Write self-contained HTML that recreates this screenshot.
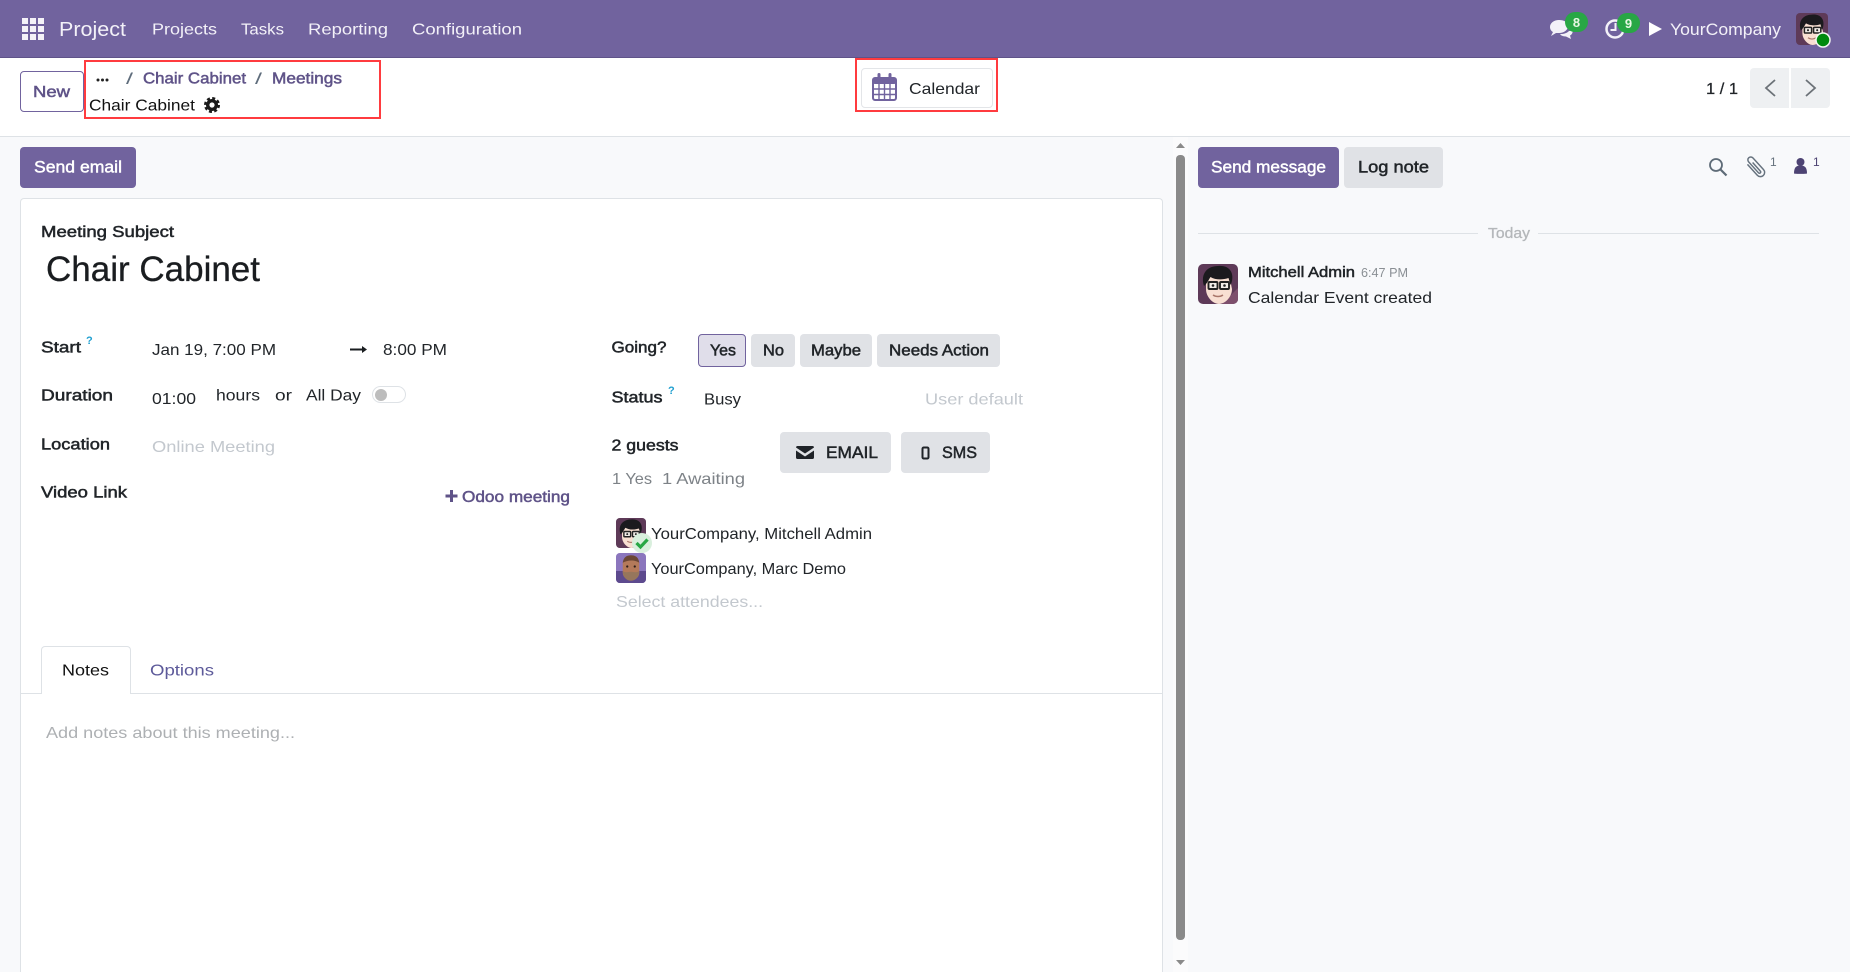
<!DOCTYPE html>
<html lang="en">
<head>
<meta charset="utf-8">
<title>Chair Cabinet</title>
<style>
html,body{margin:0;padding:0;width:1850px;height:972px;overflow:hidden;background:#f8f9fb;font-family:"Liberation Sans",sans-serif}
body{position:relative}
.b{position:absolute;box-sizing:border-box}
svg.layer{position:absolute;left:0;top:0;width:1850px;height:972px;display:block}
text{font-family:"Liberation Sans",sans-serif;font-size:16px;fill:#212529}
.m{stroke:#212529;stroke-width:.5px}
.w{fill:#f3f1f8}
.lm{fill:#5f5388;stroke:#5f5388;stroke-width:.5px}
.g{fill:#c3c8ce}
.gr{fill:#7d8287}
.wm{fill:#fff;stroke:#fff;stroke-width:.45px}
</style>
</head>
<body>
<!-- navbar -->
<div class="b" style="left:0;top:0;width:1850px;height:58px;background:#71639e;border-bottom:1px solid #5f5389"></div>
<!-- control panel -->
<div class="b" style="left:0;top:58px;width:1850px;height:79px;background:#fff;border-bottom:1px solid #dee2e6"></div>
<div class="b" style="left:20px;top:71px;width:64px;height:41px;background:#fff;border:1px solid #71639e;border-radius:4px"></div>
<div class="b" style="left:84px;top:60px;width:297px;height:59px;border:2px solid #ff3b3f"></div>
<div class="b" style="left:855px;top:58px;width:143px;height:54px;border:2px solid #ff3b3f"></div>
<div class="b" style="left:861px;top:68px;width:132px;height:40px;background:#fff;border:1px solid #e3e5e8;border-radius:4px"></div>
<div class="b" style="left:1750px;top:68px;width:39px;height:40px;background:#eef0f2;border-radius:4px 0 0 4px"></div>
<div class="b" style="left:1791px;top:68px;width:39px;height:40px;background:#eef0f2;border-radius:0 4px 4px 0"></div>
<!-- form -->
<div class="b" style="left:20px;top:147px;width:116px;height:41px;background:#71639e;border-radius:4px"></div>
<div class="b" style="left:20px;top:198px;width:1143px;height:774px;background:#fff;border:1px solid #dee2e6;border-bottom:0;border-radius:4px 4px 0 0"></div>
<div class="b" style="left:21px;top:693px;width:1141px;height:1px;background:#dee2e6"></div>
<div class="b" style="left:41px;top:646px;width:90px;height:48px;background:#fff;border:1px solid #dee2e6;border-bottom:0;border-radius:4px 4px 0 0"></div>
<!-- going buttons -->
<div class="b" style="left:698px;top:334px;width:48px;height:33px;background:#e0deea;border:1px solid #71639e;border-radius:4px"></div>
<div class="b" style="left:751px;top:334px;width:44px;height:33px;background:#e0e2e6;border-radius:4px"></div>
<div class="b" style="left:800px;top:334px;width:72px;height:33px;background:#e0e2e6;border-radius:4px"></div>
<div class="b" style="left:877px;top:334px;width:123px;height:33px;background:#e0e2e6;border-radius:4px"></div>
<div class="b" style="left:780px;top:432px;width:111px;height:41px;background:#e0e2e6;border-radius:4px"></div>
<div class="b" style="left:901px;top:432px;width:89px;height:41px;background:#e0e2e6;border-radius:4px"></div>
<!-- toggle -->
<div class="b" style="left:372px;top:386px;width:34px;height:17px;background:#fff;border:1px solid #dee2e6;border-radius:9px"></div>
<div class="b" style="left:375px;top:389px;width:12px;height:12px;background:#bdbdbd;border-radius:50%"></div>
<!-- scrollbar -->
<div class="b" style="left:1173px;top:137px;width:15px;height:835px;background:#fbfbfc"></div>
<div class="b" style="left:1176px;top:155px;width:9px;height:785px;background:#8a8a8a;border-radius:4px"></div>
<!-- chatter -->
<div class="b" style="left:1198px;top:147px;width:141px;height:41px;background:#71639e;border-radius:4px"></div>
<div class="b" style="left:1344px;top:147px;width:99px;height:41px;background:#e0e2e6;border-radius:4px"></div>
<div class="b" style="left:1198px;top:233px;width:280px;height:1px;background:#dee2e6"></div>
<div class="b" style="left:1538px;top:233px;width:281px;height:1px;background:#dee2e6"></div>

<svg class="layer" viewBox="0 0 1850 972" xmlns="http://www.w3.org/2000/svg">
<defs>
<clipPath id="rr"><rect x="0" y="0" width="40" height="40" rx="5"/></clipPath>
<g id="mitchell">
 <g clip-path="url(#rr)">
 <rect width="40" height="40" fill="#5e3a58"/>
 <path d="M24 40h16V24z" fill="#7d4f6c"/>
 <path d="M8 20c0-9 6-12 13-12s12 4 12 12l1 5c0 8-7 15-13 15S8 33 8 25z" fill="#f8dfd2"/>
 <path d="M6 22C2 9 10 2 20 2c10-1 16 5 14 15-.5 2-1 3-1.500 4l-2-7c-6 2-13 2-18-1-2 3-3 6-6.500 9z" fill="#1b1a1e"/>
 <rect x="10.500" y="18" width="9" height="7" rx="1" fill="#f2ede8" stroke="#222" stroke-width="1.900"/>
 <rect x="22" y="18" width="9" height="7" rx="1" fill="#f2ede8" stroke="#222" stroke-width="1.900"/>
 <circle cx="15" cy="21.500" r="1.300" fill="#222"/><circle cx="26.500" cy="21.500" r="1.300" fill="#222"/>
 <path d="M15 31c3 2 7 2 10 0" fill="none" stroke="#a9766a" stroke-width="1.500"/>
 </g>
</g>
<g id="marc">
 <g clip-path="url(#rr)">
 <rect width="40" height="40" fill="#8b76bd"/>
 <rect y="24" width="40" height="16" fill="#5d4a8e"/>
 <path d="M9 14c0-7 5-10 11-10s11 3 11 10v12c0 7-6 10-11 10S9 33 9 26z" fill="#b47a5a"/>
 <path d="M9 13C10 5 15 3 20 3s10 2 11 10c-6-4-15-4-22 0z" fill="#6b4735"/>
 <path d="M9 24c4 3 7 1 11 1s7 2 11-1c0 8-5 13-11 13S9 32 9 24z" fill="#96765c"/>
 <circle cx="15" cy="18" r="1.500" fill="#2a1c17"/><circle cx="25" cy="18" r="1.500" fill="#2a1c17"/>
 </g>
</g>
</defs>

<!-- navbar -->
<g fill="#f4f2f8">
<rect x="22" y="18" width="6" height="6"/><rect x="30" y="18" width="6" height="6"/><rect x="38" y="18" width="6" height="6"/>
<rect x="22" y="26" width="6" height="6"/><rect x="30" y="26" width="6" height="6"/><rect x="38" y="26" width="6" height="6"/>
<rect x="22" y="34" width="6" height="6"/><rect x="30" y="34" width="6" height="6"/><rect x="38" y="34" width="6" height="6"/>
</g>
<text x="59" y="36" style="font-size:20px" class="w" textLength="67" lengthAdjust="spacingAndGlyphs">Project</text>
<text x="152" y="34.500" class="w" textLength="65" lengthAdjust="spacingAndGlyphs">Projects</text>
<text x="241" y="34.500" class="w" textLength="43" lengthAdjust="spacingAndGlyphs">Tasks</text>
<text x="308" y="34.500" class="w" textLength="80" lengthAdjust="spacingAndGlyphs">Reporting</text>
<text x="412" y="34.500" class="w" textLength="110" lengthAdjust="spacingAndGlyphs">Configuration</text>

<path d="M1559 20c-5 0-9 3-9 7 0 2 1 4 3 5l-2 4 5-3h3c5 0 9-3 9-7s-4-6-9-6z" fill="#f3f1f8"/>
<path d="M1569 31c-2 2-5 3-8 3l-1 .5c2 1.500 4 2 6 2l5 2.500-1-3.500c2-1 3-3 2.500-5z" fill="#f3f1f8"/>
<rect x="1565" y="12" width="23" height="20" rx="10" fill="#28a745"/>
<text x="1576.500" y="27" text-anchor="middle" style="font-size:13px;fill:#e8f7e4;font-weight:bold">8</text>

<circle cx="1615" cy="29" r="8.500" fill="none" stroke="#f3f1f8" stroke-width="2.500"/>
<path d="M1615.500 23v7h-5" fill="none" stroke="#f3f1f8" stroke-width="2"/>
<rect x="1617" y="13" width="23" height="20" rx="10" fill="#28a745"/>
<text x="1628.500" y="28" text-anchor="middle" style="font-size:13px;fill:#e8f7e4;font-weight:bold">9</text>

<path d="M1649 22l13 7-13 7z" fill="#fff"/>
<text x="1670" y="35" class="w" style="font-size:17px" textLength="111" lengthAdjust="spacingAndGlyphs">YourCompany</text>
<use href="#mitchell" transform="translate(1796 13) scale(.8)"/>
<circle cx="1823" cy="40" r="7" fill="#008a0e" stroke="#f3f6f3" stroke-width="1.500"/>

<!-- control panel -->
<text x="33" y="97" class="lm" textLength="37" lengthAdjust="spacingAndGlyphs">New</text>
<g fill="#222"><circle cx="98" cy="80" r="1.500"/><circle cx="102.500" cy="80" r="1.500"/><circle cx="107" cy="80" r="1.500"/></g>
<text x="126" y="84" style="fill:#5f6d7c" textLength="7" lengthAdjust="spacingAndGlyphs">/</text>
<text x="143" y="83.500" class="lm" textLength="103" lengthAdjust="spacingAndGlyphs">Chair Cabinet</text>
<text x="255" y="84" style="fill:#5f6d7c" textLength="7" lengthAdjust="spacingAndGlyphs">/</text>
<text x="272" y="83.500" class="lm" textLength="70" lengthAdjust="spacingAndGlyphs">Meetings</text>
<text x="89" y="110.500" style="fill:#111" textLength="106" lengthAdjust="spacingAndGlyphs">Chair Cabinet</text>
<circle cx="212" cy="105" r="4.300" fill="none" stroke="#1b1b1b" stroke-width="3.400"/>
<circle cx="212" cy="105" r="6.800" fill="none" stroke="#1b1b1b" stroke-width="2.400" stroke-dasharray="3 2.340"/>

<g fill="none" stroke="#71639e">
<rect x="873" y="78" width="23" height="22" rx="2" stroke-width="2"/>
<rect x="873" y="78" width="23" height="6" rx="2" fill="#71639e" stroke="none"/>
<path d="M879 74.500v6M890 74.500v6" stroke-width="3" stroke-linecap="round"/>
<path d="M873 89h23M873 94.500h23M879 84v16M884.500 84v16M890 84v16" stroke-width="1.400"/>
</g>
<text x="909" y="94" textLength="71" lengthAdjust="spacingAndGlyphs">Calendar</text>

<text x="1706" y="94" style="font-size:16px;stroke:#212529;stroke-width:.25px" textLength="32" lengthAdjust="spacingAndGlyphs">1 / 1</text>
<path d="M1775 80l-9 8 9 8" fill="none" stroke="#6c7278" stroke-width="1.800"/>
<path d="M1806 80l9 8-9 8" fill="none" stroke="#6c7278" stroke-width="1.800"/>

<!-- form -->
<text x="34" y="172.500" class="wm" textLength="88" lengthAdjust="spacingAndGlyphs" style="font-size:17px">Send email</text>
<text x="41" y="237" class="m" textLength="133" lengthAdjust="spacingAndGlyphs">Meeting Subject</text>
<text x="46" y="281" style="font-size:35px;fill:#1a1d20;stroke:#1a1d20;stroke-width:.3px" textLength="214" lengthAdjust="spacingAndGlyphs">Chair Cabinet</text>

<text x="41" y="352.500" class="m" textLength="40" lengthAdjust="spacingAndGlyphs">Start</text>
<text x="86" y="344" style="font-size:11px;fill:#1f9fd0;font-weight:bold">?</text>
<text x="152" y="355" textLength="124" lengthAdjust="spacingAndGlyphs">Jan 19, 7:00 PM</text>
<path d="M350 349.500h14" stroke="#1a1d20" stroke-width="2"/><path d="M362 346v7l5-3.500z" fill="#1a1d20"/>
<text x="383" y="355" textLength="64" lengthAdjust="spacingAndGlyphs">8:00 PM</text>

<text x="41" y="400.500" class="m" textLength="72" lengthAdjust="spacingAndGlyphs">Duration</text>
<text x="152" y="404" textLength="44" lengthAdjust="spacingAndGlyphs">01:00</text>
<text x="216" y="400.500" textLength="44" lengthAdjust="spacingAndGlyphs">hours</text>
<text x="275" y="400.500" textLength="17" lengthAdjust="spacingAndGlyphs">or</text>
<text x="306" y="400.500" textLength="55" lengthAdjust="spacingAndGlyphs">All Day</text>

<text x="41" y="449.500" class="m" textLength="69" lengthAdjust="spacingAndGlyphs">Location</text>
<text x="152" y="452" class="g" textLength="123" lengthAdjust="spacingAndGlyphs">Online Meeting</text>
<text x="41" y="497.500" class="m" textLength="86" lengthAdjust="spacingAndGlyphs">Video Link</text>
<path d="M451.500 490v12M445.500 496h12" stroke="#5f5388" stroke-width="3"/>
<text x="462" y="502" class="lm" textLength="108" lengthAdjust="spacingAndGlyphs">Odoo meeting</text>

<text x="611.500" y="352.500" class="m" textLength="55" lengthAdjust="spacingAndGlyphs">Going?</text>
<text x="710" y="355.500" class="m" textLength="26" lengthAdjust="spacingAndGlyphs">Yes</text>
<text x="763" y="355.500" class="m" textLength="21" lengthAdjust="spacingAndGlyphs">No</text>
<text x="811" y="355.500" class="m" textLength="50" lengthAdjust="spacingAndGlyphs">Maybe</text>
<text x="889" y="355.500" class="m" textLength="100" lengthAdjust="spacingAndGlyphs">Needs Action</text>

<text x="611.500" y="402.500" class="m" textLength="51" lengthAdjust="spacingAndGlyphs">Status</text>
<text x="668" y="394" style="font-size:11px;fill:#1f9fd0;font-weight:bold">?</text>
<text x="704" y="404.500" textLength="37" lengthAdjust="spacingAndGlyphs">Busy</text>
<text x="925" y="404.500" class="g" textLength="98" lengthAdjust="spacingAndGlyphs">User default</text>

<text x="611.500" y="450.500" class="m" textLength="67" lengthAdjust="spacingAndGlyphs">2 guests</text>
<path d="M796 447.500c0-1 .8-1.500 1.500-1.500h15c.8 0 1.500.5 1.500 1.500l-9 6zM796 450.500v7c0 1 .7 1.500 1.500 1.500h15c.8 0 1.500-.5 1.500-1.500v-7l-9 6z" fill="#1f2328"/>
<text x="826" y="458" class="m" textLength="52" lengthAdjust="spacingAndGlyphs" style="font-size:17px">EMAIL</text>
<rect x="922.500" y="447.500" width="6" height="11" rx="1.300" fill="none" stroke="#1f2328" stroke-width="2"/>
<text x="942" y="458" class="m" textLength="35" lengthAdjust="spacingAndGlyphs" style="font-size:17px">SMS</text>
<text x="612" y="484" class="gr" textLength="40" lengthAdjust="spacingAndGlyphs">1 Yes</text>
<text x="662" y="484" class="gr" textLength="83" lengthAdjust="spacingAndGlyphs">1 Awaiting</text>

<use href="#mitchell" transform="translate(616 518) scale(.75)"/>
<circle cx="642" cy="543" r="10" fill="#d9efdd"/>
<path d="M636.500 543l4 4 7-7.500" fill="none" stroke="#28a745" stroke-width="3.200"/>
<text x="651" y="539" textLength="221" lengthAdjust="spacingAndGlyphs">YourCompany, Mitchell Admin</text>
<use href="#marc" transform="translate(616 553) scale(.75)"/>
<text x="651" y="574" textLength="195" lengthAdjust="spacingAndGlyphs">YourCompany, Marc Demo</text>
<text x="616" y="607" class="g" textLength="147" lengthAdjust="spacingAndGlyphs">Select attendees...</text>

<text x="62" y="675.500" style="fill:#111" textLength="47" lengthAdjust="spacingAndGlyphs">Notes</text>
<text x="150" y="675.500" style="fill:#5d5a9a" textLength="64" lengthAdjust="spacingAndGlyphs">Options</text>
<text x="46" y="738" style="fill:#adb0b3" textLength="249" lengthAdjust="spacingAndGlyphs">Add notes about this meeting...</text>

<!-- scroll arrows -->
<path d="M1180.500 143l4.500 5h-9z" fill="#8a8a8a"/>
<path d="M1180.500 965l-4.500-5h9z" fill="#8a8a8a"/>

<!-- chatter -->
<text x="1211" y="172.500" class="wm" textLength="115" lengthAdjust="spacingAndGlyphs" style="font-size:17px">Send message</text>
<text x="1358" y="172.500" class="m" textLength="71" lengthAdjust="spacingAndGlyphs" style="font-size:17px">Log note</text>
<circle cx="1716" cy="165" r="6" fill="none" stroke="#5e6b77" stroke-width="1.800"/>
<path d="M1720.500 169.500l6 6" stroke="#5e6b77" stroke-width="2.200"/>
<path d="M-4-7v14a4 4 0 0 0 8 0V-8a2.800 2.800 0 0 0-5.600 0V6a1.200 1.200 0 0 0 2.400 0V-5" transform="translate(1755.500 167) rotate(-42) scale(1.050)" fill="none" stroke="#66727e" stroke-width="1.400"/>
<text x="1770" y="166" style="font-size:12px;fill:#66727e">1</text>
<circle cx="1800.500" cy="162" r="4" fill="#4d4373"/>
<path d="M1794 173.500c0-6 2-8 6.500-8s6.500 2 6.500 8c0 .5-13 .5-13 0z" fill="#4d4373"/>
<text x="1813" y="166" style="font-size:12px;fill:#4d4373">1</text>

<text x="1488" y="238" style="font-size:15px;fill:#b4b7ba;stroke:#b4b7ba;stroke-width:.3px" textLength="42" lengthAdjust="spacingAndGlyphs">Today</text>
<use href="#mitchell" transform="translate(1198 264)"/>
<text x="1248" y="277" class="m" textLength="107" lengthAdjust="spacingAndGlyphs" style="font-size:15px">Mitchell Admin</text>
<text x="1361" y="277" style="font-size:13px;fill:#8a8f94" textLength="47" lengthAdjust="spacingAndGlyphs">6:47 PM</text>
<text x="1248" y="303" textLength="184" lengthAdjust="spacingAndGlyphs">Calendar Event created</text>
</svg>
</body>
</html>
